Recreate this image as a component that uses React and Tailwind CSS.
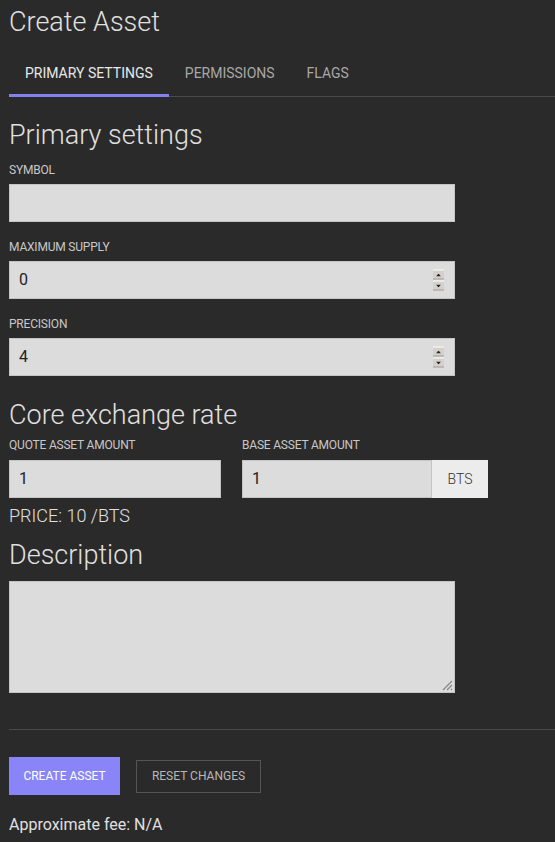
import React from "react";

function Label({ children, className = "mb-[7px]" }) {
  return (
    <div className={"text-[12px] leading-[14px] text-[#c8c8c8] uppercase tracking-[-0.2px] " + className}>
      {children}
    </div>
  );
}

function Spinner() {
  return (
    <div className="absolute right-[10px] top-1/2 -translate-y-1/2 flex flex-col gap-[1px]">
      <div className="w-[11px] h-[10px] bg-[#d4d0cc] border-t border-white border-b border-b-[#a09c98] flex items-center justify-center">
        <svg width="5" height="3" viewBox="0 0 5 3"><path d="M2.5 0L5 3H0z" fill="#222" /></svg>
      </div>
      <div className="w-[11px] h-[10px] bg-[#d4d0cc] border-t border-white border-b border-b-[#a09c98] flex items-center justify-center">
        <svg width="5" height="3" viewBox="0 0 5 3"><path d="M0 0H5L2.5 3z" fill="#222" /></svg>
      </div>
    </div>
  );
}

function Input({ value, spinner, className = "" }) {
  return (
    <div className={"relative h-[38px] bg-[#dcdcdc] border border-[#c4c4c4] flex items-center px-[9px] text-[16px] text-[#222] " + className}>
      {value}
      {spinner && <Spinner />}
    </div>
  );
}

export default function App() {
  return (
    <div className="min-h-[842px] w-[555px] bg-[#2a2a2a] text-[#e6e6e6] overflow-hidden" style={{ fontFamily: "Roboto, 'Liberation Sans', sans-serif" }}>
      <div className="pl-[9px]">
        <h1 className="text-[27px] font-light leading-[32px] pt-[6px] text-[#e0e0e0]">Create Asset</h1>
        <div className="mt-[12px] flex items-start border-b border-[#4a4a4a] h-[47px]">
          <div className="px-[16px] h-[47px] pt-[3px] -mb-[1px] flex items-center text-[14px] text-[#e8e8e8] border-b-[3px] border-[#8480f0]">PRIMARY SETTINGS</div>
          <div className="px-[16px] h-[46px] py-[3px] flex items-center text-[14px] text-[#a8a8a8]">PERMISSIONS</div>
          <div className="px-[16px] h-[46px] py-[3px] flex items-center text-[14px] text-[#a8a8a8]">FLAGS</div>
        </div>

        <div className="w-[446px]">
          <h2 className="text-[27px] font-light leading-[32px] mt-[22px] text-[#e0e0e0]">Primary settings</h2>
          <div className="mt-[12px]"><Label>Symbol</Label></div>
          <Input value="" />
          <div className="mt-[18px]"><Label>Maximum supply</Label></div>
          <Input value="0" spinner />
          <div className="mt-[18px]"><Label>Precision</Label></div>
          <Input value="4" spinner />
        </div>

        <h2 className="text-[27px] font-light leading-[32px] mt-[23px] text-[#e0e0e0]">Core exchange rate</h2>
        <div className="flex gap-[21px] mt-[7px]">
          <div className="w-[212px]">
            <Label className="mb-[8px]">Quote asset amount</Label>
            <Input value="1" />
          </div>
          <div>
            <Label className="mb-[8px]">Base asset amount</Label>
            <div className="flex">
              <Input value="1" className="w-[190px]" />
              <div className="h-[38px] w-[56px] bg-[#ececec] flex items-center justify-center text-[14px] font-light text-[#333]">BTS</div>
            </div>
          </div>
        </div>
        <div className="text-[18px] font-light leading-[20px] mt-[8px] text-[#e0e0e0]">PRICE: 10 /BTS</div>

        <h2 className="text-[27px] font-light leading-[32px] mt-[13px] text-[#e0e0e0]">Description</h2>
        <div className="relative mt-[10px] w-[446px] h-[112px] bg-[#dcdcdc] border border-[#c4c4c4]">
          <svg className="absolute right-[1px] bottom-[1px]" width="12" height="12" viewBox="0 0 12 12">
            <path d="M11 2L2 11M11 6L6 11M11 10L10 11" stroke="#888" strokeWidth="1.2" />
          </svg>
        </div>

        <div className="mt-[36px] border-t border-[#4a4a4a]" />

        <div className="flex items-center gap-[16px] mt-[27px]">
          <div className="h-[38px] w-[111px] bg-[#8985f8] flex items-center justify-center text-[12px] text-white">CREATE ASSET</div>
          <div className="h-[33px] w-[125px] border border-[#555] flex items-center justify-center text-[12px] text-[#b8b8b8]">RESET CHANGES</div>
        </div>
        <div className="text-[16px] leading-[24px] mt-[18px] text-[#e0e0e0]">Approximate fee: N/A</div>
      </div>
    </div>
  );
}
